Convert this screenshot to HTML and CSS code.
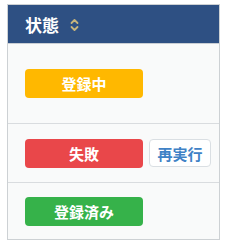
FILE: index.html
```html
<!DOCTYPE html>
<html lang="ja">

<head>
    <meta charset="UTF-8">
    <meta name="viewport" content="width=device-width, initial-scale=1.0">
    <title>状態</title>
    <link rel="stylesheet" href="styles.css">
</head>

<body>
    <div class="status-table">
        <div class="status-head">
            <span>状態</span>
            <svg class="sort-icon" width="9" height="14" viewBox="0 0 9 14">
                <path d="M1.5 5 L4.5 2 L7.5 5 M1.5 9 L4.5 12 L7.5 9" fill="none" stroke="#c8b57c" stroke-width="1.8" stroke-linecap="round" stroke-linejoin="round"/>
            </svg>
        </div>
        <div class="status-row first">
            <span class="badge badge-pending">登録中</span>
        </div>
        <div class="status-row">
            <span class="badge badge-failed">失敗</span>
            <button class="retry-button">再実行</button>
        </div>
        <div class="status-row last">
            <span class="badge badge-done">登録済み</span>
        </div>
    </div>
</body>

</html>
```

FILE: styles.css
```css
body {
    margin: 0;
    padding: 4px 0 0 7px;
    background-color: #fff;
    font-family: 'Noto Sans CJK JP', 'Noto Sans', sans-serif;
}

.status-table {
    width: 211px;
    border: 1px solid #cdd1d4;
    background-color: #f9fafa;
}

.status-head {
    height: 38px;
    background-color: #2e5083;
    color: #fff;
    font-size: 17px;
    font-weight: bold;
    display: flex;
    align-items: center;
    padding-left: 17px;
    border-bottom: 1px solid #c9ced4;
}

.sort-icon {
    margin-left: 11px;
    margin-top: 1px;
}

.status-row {
    display: flex;
    align-items: center;
    padding-left: 17px;
    height: 58px;
    border-bottom: 1px solid #d9dcdf;
}

.status-row.first {
    height: 79px;
    align-items: flex-start;
    padding-top: 0;
}

.status-row.first .badge {
    margin-top: 25px;
}

.status-row.last {
    height: 56px;
    border-bottom: none;
}

.badge {
    width: 118px;
    height: 29px;
    border-radius: 4px;
    color: #fff;
    font-size: 15px;
    font-weight: bold;
    display: flex;
    align-items: center;
    justify-content: center;
}

.badge-pending {
    background-color: #ffb800;
}

.badge-failed {
    background-color: #e9474a;
}

.badge-done {
    background-color: #36b24a;
}

.retry-button {
    margin-left: 6px;
    width: 62px;
    height: 28px;
    padding: 0;
    border: 1px solid #dadfe3;
    border-radius: 4px;
    background-color: #fff;
    color: #3f82c6;
    font-family: inherit;
    font-size: 15px;
    font-weight: bold;
}
```
